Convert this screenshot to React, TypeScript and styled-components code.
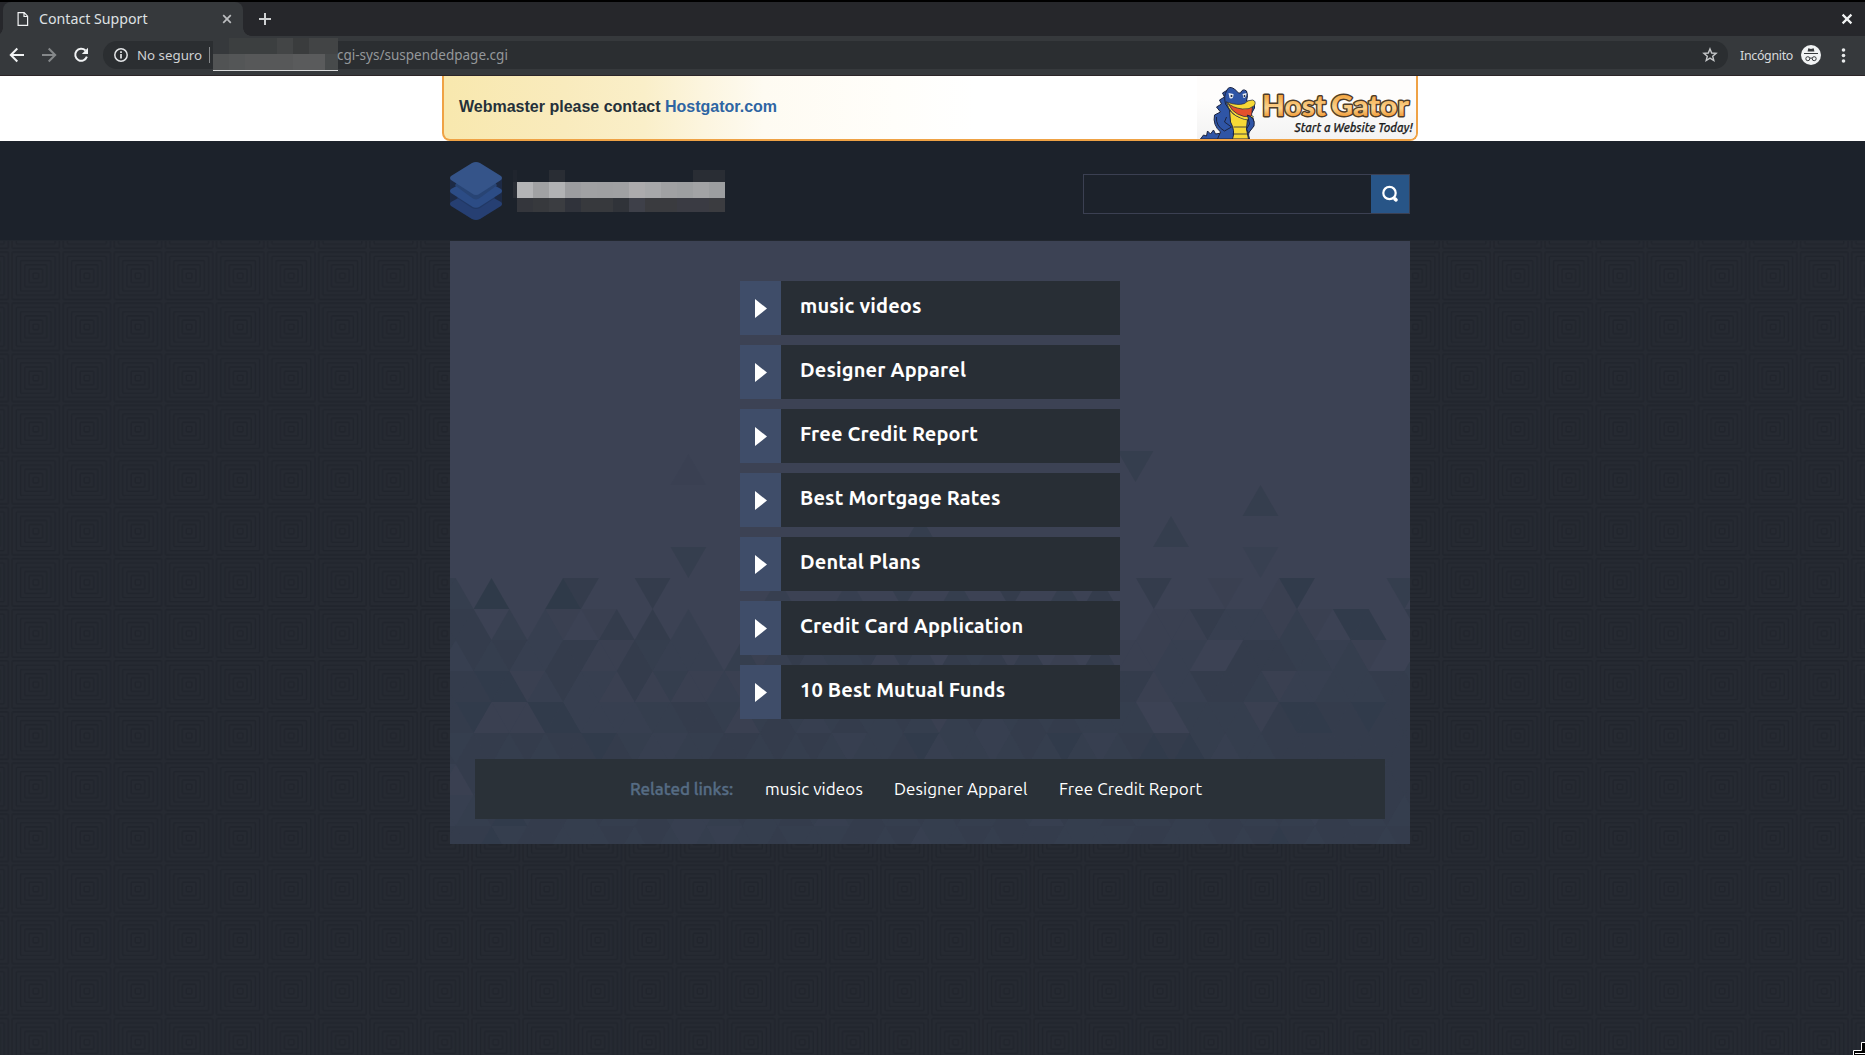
import React from "react";
import styled, { createGlobalStyle } from "styled-components";

const GlobalStyle = createGlobalStyle`
  *, *::before, *::after { box-sizing: border-box; }
  html, body { margin: 0; padding: 0; }
  body { background: #262a32; overflow: hidden; }
`;

const uiFont = `"Noto Sans", "Open Sans", sans-serif`;
const pageFont = `Ubuntu, "Noto Sans", "Open Sans", sans-serif`;

const Screen = styled.div`
  position: relative;
  display: flex;
  flex-direction: column;
  width: 1865px;
  height: 1055px;
  overflow: hidden;
  font-family: ${uiFont};
`;

/* ---------- browser chrome ---------- */

const TabStrip = styled.div`
  display: flex;
  flex: none;
  height: 36px;
  padding-left: 3px;
  border-top: 2px solid #000;
  background: #26272b;
`;

const Tab = styled.div`
  position: relative;
  display: flex;
  align-items: center;
  width: 240px;
  padding: 0 9px 0 14px;
  border-radius: 8px 8px 0 0;
  background: #36393c;
  color: #dfe1e3;
  font-size: 14.2px;
  &::before, &::after {
    content: "";
    position: absolute;
    bottom: 0;
    width: 8px;
    height: 8px;
  }
  &::before {
    left: -8px;
    background: radial-gradient(circle at 0 0, transparent 7.5px, #36393c 8px);
  }
  &::after {
    right: -8px;
    background: radial-gradient(circle at 100% 0, transparent 7.5px, #36393c 8px);
  }
`;

const TabTitle = styled.span`
  flex: 1;
  margin-left: 10px;
  line-height: 20px;
  white-space: nowrap;
`;

const NewTab = styled.div`
  display: flex;
  align-items: center;
  margin-left: 15px;
`;

const CloseWindow = styled.div`
  display: flex;
  align-items: center;
  margin: 0 12px 0 auto;
`;

const Toolbar = styled.div`
  display: flex;
  flex: none;
  align-items: center;
  height: 40px;
  padding: 0 15px 2px 9px;
  border-bottom: 1px solid #2c2528;
  background: #36393c;
`;

const NavButtons = styled.div`
  display: flex;
  gap: 16px;
  width: 94px;
`;

const AddressBar = styled.div`
  display: flex;
  flex: 1;
  align-items: center;
  height: 28px;
  margin-top: 1px;
  padding: 0 10px 0 11px;
  border-radius: 14px;
  background: #2b2e31;
  font-size: 13.5px;
`;

const Security = styled.span`
  width: 64px;
  margin-left: 9px;
  color: #cfd1d3;
  font-size: 13.3px;
  white-space: nowrap;
`;

const Divider = styled.i`
  width: 1px;
  height: 16px;
  margin: 0 3px 0 8px;
  background: #85888b;
`;

const Url = styled.span`
  flex: 1;
  margin-left: -1px;
  color: #95989b;
  white-space: nowrap;
`;

const Profile = styled.div`
  display: flex;
  align-items: center;
  gap: 8px;
  margin: 1px 17px 0 12px;
  color: #d8dadc;
`;

const ProfileName = styled.span`
  width: 53px;
  font-size: 12.4px;
  letter-spacing: -0.3px;
  white-space: nowrap;
`;

const MaskedHost = styled.div`
  flex: none;
  width: 125px;
  height: 33px;
  margin-top: -1px;
  border-bottom: 1px solid #d8d9da;
`;

const MosaicRow = styled.div<{ $h: number }>`
  display: flex;
  height: ${(p) => p.$h}px;
`;

const MosaicCell = styled.div<{ $w: number; $c: string }>`
  flex: none;
  width: ${(p) => p.$w}px;
  background: ${(p) => p.$c};
`;

type Cell = [number, string];
const Mosaic = ({ h, cells }: { h: number; cells: Cell[] }) => (
  <MosaicRow $h={h}>
    {cells.map(([w, c], i) => (
      <MosaicCell key={i} $w={w} $c={c} />
    ))}
  </MosaicRow>
);

const hostTop: Cell[] = [[16, "#36393c"], [48, "#3c3f40"], [16, "#434546"], [16, "#3a3c3d"], [29, "#424445"]];
const hostBottom: Cell[] = [[16, "#515354"], [16, "#545657"], [48, "#575859"], [32, "#5a5b5c"], [13, "#474a4b"]];

/* ---------- page ---------- */

const Notice = styled.div`
  display: flex;
  flex: none;
  justify-content: center;
  height: 65px;
  padding-right: 5px;
  background: #fff;
`;

const NoticeBox = styled.div`
  display: flex;
  justify-content: space-between;
  width: 976px;
  border: 2px solid #efa245;
  border-top: 0;
  border-radius: 0 0 8px 8px;
  background: linear-gradient(90deg, #f8e8ae 0, #f9ebbd 120px, #faefc9 200px, #fcf5df 260px, #fefbf2 320px, #fffefa 450px, #fff 530px);
  overflow: hidden;
`;

const NoticeText = styled.p`
  margin: 0;
  padding: 20px 0 0 15px;
  color: #25313a;
  font: bold 16px/21px "Liberation Sans", Arial, sans-serif;
`;

const NoticeLink = styled.span`
  color: #2e65a3;
`;

const Header = styled.header`
  display: flex;
  flex: none;
  justify-content: center;
  height: 100px;
  padding-right: 5px;
  border-bottom: 1px solid #22272f;
  background: #1c222b;
`;

const HeaderInner = styled.div`
  display: flex;
  width: 960px;
`;

const Brand = styled.div`
  display: flex;
  flex: 1;
  padding-top: 21px;
`;

const MaskedTitle = styled.div`
  margin: 8px 0 0 11px;
`;

const Search = styled.div`
  display: flex;
  width: 327px;
  height: 40px;
  margin-top: 33px;
  border: 1px solid #3b4052;
`;

const SearchField = styled.div`
  flex: 1;
`;

const SearchButton = styled.div`
  display: flex;
  align-items: center;
  justify-content: center;
  width: 38px;
  background: #285587;
`;

const Body = styled.main`
  position: relative;
  display: flex;
  flex: 1;
  justify-content: center;
  padding-right: 5px;
  background: #262a32;
`;

const Backdrop = styled.svg`
  position: absolute;
  inset: 0;
  width: 100%;
  height: 100%;
`;

const Panel = styled.section`
  position: relative;
  display: flex;
  flex-direction: column;
  align-items: center;
  width: 960px;
  height: 603px;
  padding: 40px 25px 25px;
  background: #3c4254;
  font-family: ${pageFont};
`;

const LinkList = styled.nav`
  position: relative;
  display: flex;
  flex-direction: column;
  gap: 10px;
  width: 380px;
`;

const LinkRow = styled.div`
  display: flex;
  height: 54px;
  background: #282e35;
`;

const LinkIcon = styled.div`
  width: 41px;
  padding: 18px 0 0 15px;
  background: #3f4d69;
`;

const LinkLabel = styled.span`
  padding-left: 19px;
  color: #fff;
  font-size: 20px;
  font-weight: 700;
  line-height: 50px;
  letter-spacing: 0.16px;
  white-space: nowrap;
`;

const Related = styled.div`
  position: relative;
  display: flex;
  align-items: center;
  width: 910px;
  height: 60px;
  margin-top: auto;
  padding: 0 0 2px 155px;
  background: #2a3138;
`;

const RelatedTitle = styled.span`
  width: 135px;
  color: #566c84;
  font-size: 17px;
  font-weight: 500;
  letter-spacing: -0.08px;
  -webkit-text-stroke: 0.35px #566c84;
`;

const RelatedLink = styled.span<{ $w: number }>`
  width: ${(p) => p.$w}px;
  color: #fff;
  font-size: 17px;
  letter-spacing: 0.09px;
  white-space: nowrap;
`;

/* Triangle mosaic: each digit is the shade of one triangle, split into left, middle and right thirds. */
const SIDE = 17.9;
const ROW = 31;
const shades = [
  ["3306000640004000000", "2000200300300400304", "004000100150000030"],
  ["4440302101404020000", "0102030102030102030", "001114222131055004"],
  ["4243422441143222031", "2423341420434140104", "111220044433231003"],
  ["4445512422141311211", "1323433243323433244", "441224443122333443"],
  ["4451115522223344313", "4323433431342343433", "330033331455445444"],
  ["4344343445432233443", "4343233452332343532", "345453233444444444"],
  ["2143434434343342343", "3434343323434343434", "344343323444343444"],
  ["2234534434334322343", "3432343343433432433", "433433433432433434"],
  ["4445344333434323233", "4333443423343444333", "344333434543444343"],
].map((parts) => parts.join(""));
const strays = [
  { x: 688.4, y: 454, up: true, s: 1 },
  { x: 688.4, y: 547, up: false, s: 4 },
  { x: 1135.5, y: 451, up: false, s: 4 },
  { x: 1260.5, y: 485, up: true, s: 4 },
  { x: 1171, y: 516, up: true, s: 4 },
  { x: 1260.5, y: 547, up: false, s: 2 },
  { x: 920.5, y: 516, up: true, s: 4 },
];
const triangle = (x: number, y: number, up: boolean) =>
  up
    ? `${x},${y} ${x + SIDE},${y + ROW} ${x - SIDE},${y + ROW}`
    : `${x - SIDE},${y} ${x + SIDE},${y} ${x},${y + ROW}`;

const Triangles = () => (
  <Backdrop viewBox="0 0 960 603" fill="#2e3947">
    {shades.map((row, r) =>
      row.split("").map((d, n) => {
        const i = n - 1;
        const up = (i + r) % 2 === 0;
        return d === "0" ? null : (
          <polygon
            key={`${r}-${n}`}
            points={triangle(5.7 + SIDE * i, 337 + ROW * r, up)}
            fillOpacity={Number(d) * 0.145}
          />
        );
      })
    )}
    {strays.map((t) => (
      <polygon key={`${t.x}-${t.y}`} points={triangle(t.x - 450, t.y - 241, t.up)} fillOpacity={t.s * 0.11} />
    ))}
  </Backdrop>
);

const Squares = () => (
  <Backdrop>
    <defs>
      <pattern id="squares" x="10.2" y="9.2" width="51.1" height="51.1" patternUnits="userSpaceOnUse">
        <g fill="none" stroke="#21252d" strokeWidth="1.6">
          {[23.7, 19.4, 15.2, 11, 6.8, 2.8].map((h) => (
            <rect key={h} x={25.6 - h} y={25.6 - h} width={h * 2} height={h * 2} rx="0.8" />
          ))}
        </g>
      </pattern>
    </defs>
    <rect width="100%" height="100%" fill="url(#squares)" />
  </Backdrop>
);

const StackLogo = () => (
  <svg width="52" height="58" viewBox="0 0 52 58">
    <path d="M0 17V42L22 57H30L52 42V17Z" fill="#1d2a45" />
    <path d="M1 40Q-1 42 1 44L22 57Q26 59 30 57L51 44Q53 42 51 40L40 34H12Z" fill="#263f72" />
    <path d="M7 36L22 46Q26 48 30 46L45 36L40 30H12Z" fill="#213864" />
    <path d="M1 27Q-1 29 1 31L22 44.5Q26 47 30 44.5L51 31Q53 29 51 27L40 21H12Z" fill="#2c4c85" />
    <path d="M7 23L22 34Q26 38 30 34L45 23L40 16H12Z" fill="#284474" stroke="#284474" strokeWidth="3" />
    <path d="M22 1Q26 -1 30 1L51 14Q53 16 51 18L30 31.5Q26 34.5 22 31.5L1 18Q-1 16 1 14Z" fill="#355489" />
  </svg>
);

const GatorLogo = () => (
  <svg width="220" height="63" viewBox="0 0 220 63">
    <defs>
      <linearGradient id="shade" x1="0" y1="0" x2="0" y2="1">
        <stop offset="0.35" stopColor="#fefdfc" />
        <stop offset="1" stopColor="#f3f3f3" />
      </linearGradient>
      <linearGradient id="gold" x1="0" y1="0" x2="0" y2="1">
        <stop offset="0.2" stopColor="#f2a33c" />
        <stop offset="0.6" stopColor="#fbd28e" />
        <stop offset="0.85" stopColor="#ef9a35" />
      </linearGradient>
    </defs>
    <rect x="1" width="219" height="63" fill="url(#shade)" />
    <g transform="translate(1.5 0)" stroke="#1c2440" strokeWidth="1" strokeLinejoin="round">
      <path d="M3 63L6 59L9 60L10 55L13 58L16 54L18 58L24 57L28 63Z" fill="#2f55a6" />
      <path d="M30 14L25 17L27 21L22 24L24 28L19 31L23 36L17 39Q15 49 23 56L20 63H52Q49 55 56 50Q58 40 50 38L48 26Z" fill="#2f55a6" />
      <path d="M32 34L50 43L49 53L51 63H35Q38 55 33 46Z" fill="#f6d936" />
      <path d="M36 51H49M35 58H50" fill="none" strokeWidth="0.8" />
      <path d="M28 28Q26 20 29 15Q31 9 37 13L41 17L43 17Q45 12 49 15Q51 19 49 25L57 26V32L52 41Q40 44 32 34Z" fill="#2f55a6" />
      <path d="M29 26Q38 35 53 38L56 41Q51 46 43 42Q32 38 29 26Z" fill="#f6d936" strokeWidth="0.7" />
      <path d="M31 28Q42 32 55 31L54 40Q46 42 40 38Q34 35 31 28Z" fill="#e4502c" strokeWidth="0.7" />
      <path d="M29 26Q40 30 47 27.5Q50 24 55 24Q59 25 57 29.5Q52 34 45 33Q35 32 29 26Z" fill="#f6d936" strokeWidth="0.7" />
      <path d="M19 41Q18 50 27 55L34 51L27 46L29 41" fill="#2f55a6" />
      <path d="M50 39Q58 42 56.5 50L51 57L49 53L52 48Z" fill="#2f55a6" />
    </g>
    <g transform="translate(1.5 0)">
      <path d="M31 17L36 18Q36 24 32 22ZM45 18L49 17Q49 22 46 22Z" fill="#e9ecf2" />
      <circle cx="34" cy="20" r="1" fill="#162037" />
      <circle cx="47" cy="20" r="0.9" fill="#162037" />
    </g>
    <g
      fontFamily='Lato, "Liberation Sans", sans-serif'
      fontWeight="900"
      fontSize="29"
      fill="url(#gold)"
      stroke="#4d3c28"
      strokeWidth="2.8"
      paintOrder="stroke"
      strokeLinejoin="round"
    >
      <text x="66" y="40" textLength="64" lengthAdjust="spacingAndGlyphs">Host</text>
      <text x="135" y="40" textLength="78" lengthAdjust="spacingAndGlyphs">Gator</text>
    </g>
    <text
      x="98.5"
      y="55.5"
      textLength="118"
      lengthAdjust="spacingAndGlyphs"
      fontFamily='Ubuntu, "Open Sans", sans-serif'
      fontSize="12"
      fontWeight="500"
      fontStyle="italic"
      fill="#1c1c1c"
      stroke="#1c1c1c"
      strokeWidth="0.25"
    >
      Start a Website Today!
    </text>
  </svg>
);

const IncognitoIcon = () => (
  <svg width="20" height="20" viewBox="0 0 20 20">
    <circle cx="10" cy="10" r="10" fill="#f1f3f4" />
    <path d="M7.3 3.3L10 4L12.7 3.3L13.4 6.6H6.6ZM3 8H17V9.1H3Z" fill="#36393c" />
    <g fill="none" stroke="#36393c" strokeWidth="1">
      <circle cx="6.8" cy="13.7" r="2" />
      <circle cx="13.2" cy="13.7" r="2" />
      <path d="M8.8 13.3Q10 12.6 11.2 13.3" />
    </g>
  </svg>
);

const links = [
  "music videos",
  "Designer Apparel",
  "Free Credit Report",
  "Best Mortgage Rates",
  "Dental Plans",
  "Credit Card Application",
  "10 Best Mutual Funds",
];

const related: [string, number][] = [
  ["music videos", 129],
  ["Designer Apparel", 165],
  ["Free Credit Report", 150],
];

const titleRows: { h: number; cells: Cell[] }[] = [
  { h: 12, cells: [[4, "#20252e"], [32, "#1c222b"], [16, "#292d34"], [128, "#1c222b"], [32, "#292d34"]] },
  {
    h: 16,
    cells: [[4, "#292d35"], [16, "#b3b4b6"], [16, "#a0a1a3"], [16, "#b1b2b4"], [16, "#9c9da0"], [16, "#a0a1a3"], [16, "#9fa0a2"], [16, "#a0a1a3"], [16, "#acabad"], [16, "#a7a8aa"], [16, "#a0a1a3"], [16, "#9d9fa1"], [16, "#a2a3a5"], [16, "#9c9ea0"]],
  },
  {
    h: 14,
    cells: [[4, "#1c222b"], [16, "#34363c"], [16, "#37393d"], [16, "#3b3d41"], [16, "#30333b"], [32, "#37393d"], [16, "#303339"], [16, "#3e4049"], [32, "#3a3b3f"], [32, "#3a3b43"], [16, "#3b3c40"]],
  },
];

const ResizeCursor = styled.svg`
  position: absolute;
  right: 0;
  bottom: 0;
`;

export default function App() {
  return (
    <Screen>
      <GlobalStyle />
      <TabStrip>
        <Tab>
          <svg width="12" height="14" viewBox="0 0 12 14" fill="none" stroke="#f1f3f4" strokeWidth="1.2">
            <path d="M1.1 0.7H7.2L10.6 4.2V13.3H1.1ZM7 0.9V4.5H10.5" />
          </svg>
          <TabTitle>Contact Support</TabTitle>
          <svg width="14" height="14" viewBox="0 0 14 14" stroke="#bcbec0" strokeWidth="1.7">
            <path d="M3.2 3.2L10.8 10.8M10.8 3.2L3.2 10.8" />
          </svg>
        </Tab>
        <NewTab>
          <svg width="14" height="14" viewBox="0 0 14 14" stroke="#cfd1d3" strokeWidth="2">
            <path d="M7 1V13M1 7H13" />
          </svg>
        </NewTab>
        <CloseWindow>
          <svg width="12" height="12" viewBox="0 0 12 12" stroke="#f1f3f4" strokeWidth="2.2">
            <path d="M1.6 1.6L10.4 10.4M10.4 1.6L1.6 10.4" />
          </svg>
        </CloseWindow>
      </TabStrip>
      <Toolbar>
        <NavButtons>
          <svg width="16" height="16" viewBox="0 0 16 16" fill="none" stroke="#f1f3f4" strokeWidth="2">
            <path d="M15 8H2.5M8.3 1.5L1.8 8L8.3 14.5" />
          </svg>
          <svg width="16" height="16" viewBox="0 0 16 16" fill="none" stroke="#85888a" strokeWidth="2">
            <path d="M1 8H13.5M7.7 1.5L14.2 8L7.7 14.5" />
          </svg>
          <svg width="16" height="16" viewBox="0 0 16 16" fill="none" stroke="#f1f3f4" strokeWidth="2">
            <path d="M12.5 3.5A6 6 0 1 0 13.9 9.7" />
            <path d="M15 0.8V7H8.8Z" fill="#f1f3f4" stroke="none" />
          </svg>
        </NavButtons>
        <AddressBar>
          <svg width="14" height="14" viewBox="0 0 14 14" fill="none" stroke="#e3e5e7">
            <circle cx="7" cy="7" r="6.2" strokeWidth="1.5" />
            <path d="M7 6V10.5M7 3.3V5" strokeWidth="1.7" />
          </svg>
          <Security>No seguro</Security>
          <Divider />
          <MaskedHost>
            <Mosaic h={16} cells={hostTop} />
            <Mosaic h={16} cells={hostBottom} />
          </MaskedHost>
          <Url>cgi-sys/suspendedpage.cgi</Url>
          <svg width="16" height="16" viewBox="0 0 16 16" fill="none" stroke="#c5c7c9" strokeWidth="1.4">
            <path d="M8 1.9L9.7 6L14.1 6.3L10.7 9.2L11.8 13.6L8 11.2L4.2 13.6L5.3 9.2L1.9 6.3L6.3 6Z" />
          </svg>
        </AddressBar>
        <Profile>
          <ProfileName>Incógnito</ProfileName>
          <IncognitoIcon />
        </Profile>
        <svg width="12" height="16" viewBox="0 0 12 16" fill="#e8eaeb">
          <circle cx="5.5" cy="3" r="1.8" />
          <circle cx="5.5" cy="8.5" r="1.8" />
          <circle cx="5.5" cy="14" r="1.8" />
        </svg>
      </Toolbar>

      <Notice>
        <NoticeBox>
          <NoticeText>
            Webmaster please contact <NoticeLink>Hostgator.com</NoticeLink>
          </NoticeText>
          <GatorLogo />
        </NoticeBox>
      </Notice>

      <Header>
        <HeaderInner>
          <Brand>
            <StackLogo />
            <MaskedTitle>
              {titleRows.map((row) => (
                <Mosaic key={row.h} h={row.h} cells={row.cells} />
              ))}
            </MaskedTitle>
          </Brand>
          <Search>
            <SearchField />
            <SearchButton>
              <svg width="18" height="18" viewBox="0 0 18 18" fill="none" stroke="#fff">
                <circle cx="8.5" cy="8" r="6.2" strokeWidth="2.2" />
                <path d="M14 14L15 14.8" strokeWidth="3.6" strokeLinecap="round" />
              </svg>
            </SearchButton>
          </Search>
        </HeaderInner>
      </Header>

      <Body>
        <Squares />
        <Panel>
          <Triangles />
          <LinkList>
            {links.map((label) => (
              <LinkRow key={label}>
                <LinkIcon>
                  <svg width="12" height="19" viewBox="0 0 12 19" fill="#fff">
                    <path d="M0 0L12 9.5L0 19Z" />
                  </svg>
                </LinkIcon>
                <LinkLabel>{label}</LinkLabel>
              </LinkRow>
            ))}
          </LinkList>
          <Related>
            <RelatedTitle>Related links:</RelatedTitle>
            {related.map(([label, w]) => (
              <RelatedLink key={label} $w={w}>
                {label}
              </RelatedLink>
            ))}
          </Related>
        </Panel>
      </Body>
      <ResizeCursor width="12" height="13" viewBox="0 0 12 13">
        <path d="M0.5 14V8.5H8.5V0.5H13V14Z" fill="#000" stroke="#fff" />
        <path d="M2 11.5H13" stroke="#fff" />
      </ResizeCursor>
    </Screen>
  );
}
